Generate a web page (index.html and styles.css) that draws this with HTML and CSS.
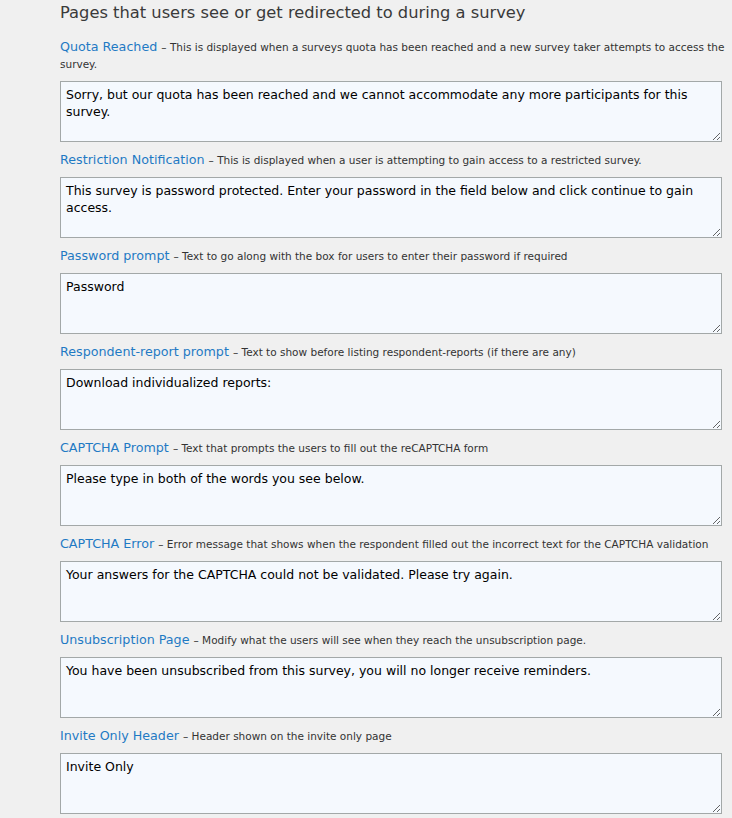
FILE: index.html
```html
<!DOCTYPE html>
<html>
<head>
<meta charset="utf-8">
<link rel="stylesheet" href="styles.css">
</head>
<body>
<div class="page">
  <h2 class="title">Pages that users see or get redirected to during a survey</h2>

  <div class="field">
    <div class="label"><span class="name">Quota Reached</span> <span class="desc">– This is displayed when a surveys quota has been reached and a new survey taker attempts to access the survey.</span></div>
    <textarea class="box">Sorry, but our quota has been reached and we cannot accommodate any more participants for this survey.</textarea>
  </div>

  <div class="field">
    <div class="label"><span class="name">Restriction Notification</span> <span class="desc">– This is displayed when a user is attempting to gain access to a restricted survey.</span></div>
    <textarea class="box">This survey is password protected. Enter your password in the field below and click continue to gain access.</textarea>
  </div>

  <div class="field">
    <div class="label"><span class="name">Password prompt</span> <span class="desc">– Text to go along with the box for users to enter their password if required</span></div>
    <textarea class="box">Password</textarea>
  </div>

  <div class="field">
    <div class="label"><span class="name">Respondent-report prompt</span> <span class="desc">– Text to show before listing respondent-reports (if there are any)</span></div>
    <textarea class="box">Download individualized reports:</textarea>
  </div>

  <div class="field">
    <div class="label"><span class="name">CAPTCHA Prompt</span> <span class="desc">– Text that prompts the users to fill out the reCAPTCHA form</span></div>
    <textarea class="box">Please type in both of the words you see below.</textarea>
  </div>

  <div class="field">
    <div class="label"><span class="name">CAPTCHA Error</span> <span class="desc">– Error message that shows when the respondent filled out the incorrect text for the CAPTCHA validation</span></div>
    <textarea class="box">Your answers for the CAPTCHA could not be validated. Please try again.</textarea>
  </div>

  <div class="field">
    <div class="label"><span class="name">Unsubscription Page</span> <span class="desc">– Modify what the users will see when they reach the unsubscription page.</span></div>
    <textarea class="box">You have been unsubscribed from this survey, you will no longer receive reminders.</textarea>
  </div>

  <div class="field">
    <div class="label"><span class="name">Invite Only Header</span> <span class="desc">– Header shown on the invite only page</span></div>
    <textarea class="box">Invite Only</textarea>
  </div>
</div>
</body>
</html>
```

FILE: styles.css
```css
html, body {
  margin: 0;
  padding: 0;
  background: #f0f0f0;
}

body {
  font-family: "DejaVu Sans", Verdana, sans-serif;
  color: #333;
}

.page {
  padding-left: 60px;
  width: 666px;
}

.title {
  margin: 0;
  padding-bottom: 3px;
  font-size: 16.3px;
  font-weight: normal;
  line-height: 26px;
  color: #3a3a3a;
}

.label {
  padding: 9px 0 9px;
  font-size: 12.7px;
  line-height: 17px;
}

.name {
  color: #1f7ac4;
}

.desc {
  font-size: 10.5px;
  line-height: 12px;
  color: #333;
}

.box {
  display: block;
  box-sizing: border-box;
  width: 662px;
  height: 61px;
  margin: 0;
  padding: 4px 5px 3px;
  border: 1px solid #a3a8a8;
  border-radius: 0;
  background: #f5f9fe;
  font-family: "DejaVu Sans", Verdana, sans-serif;
  font-size: 12.5px;
  line-height: 17px;
  color: #000;
  outline: none;
}
```
